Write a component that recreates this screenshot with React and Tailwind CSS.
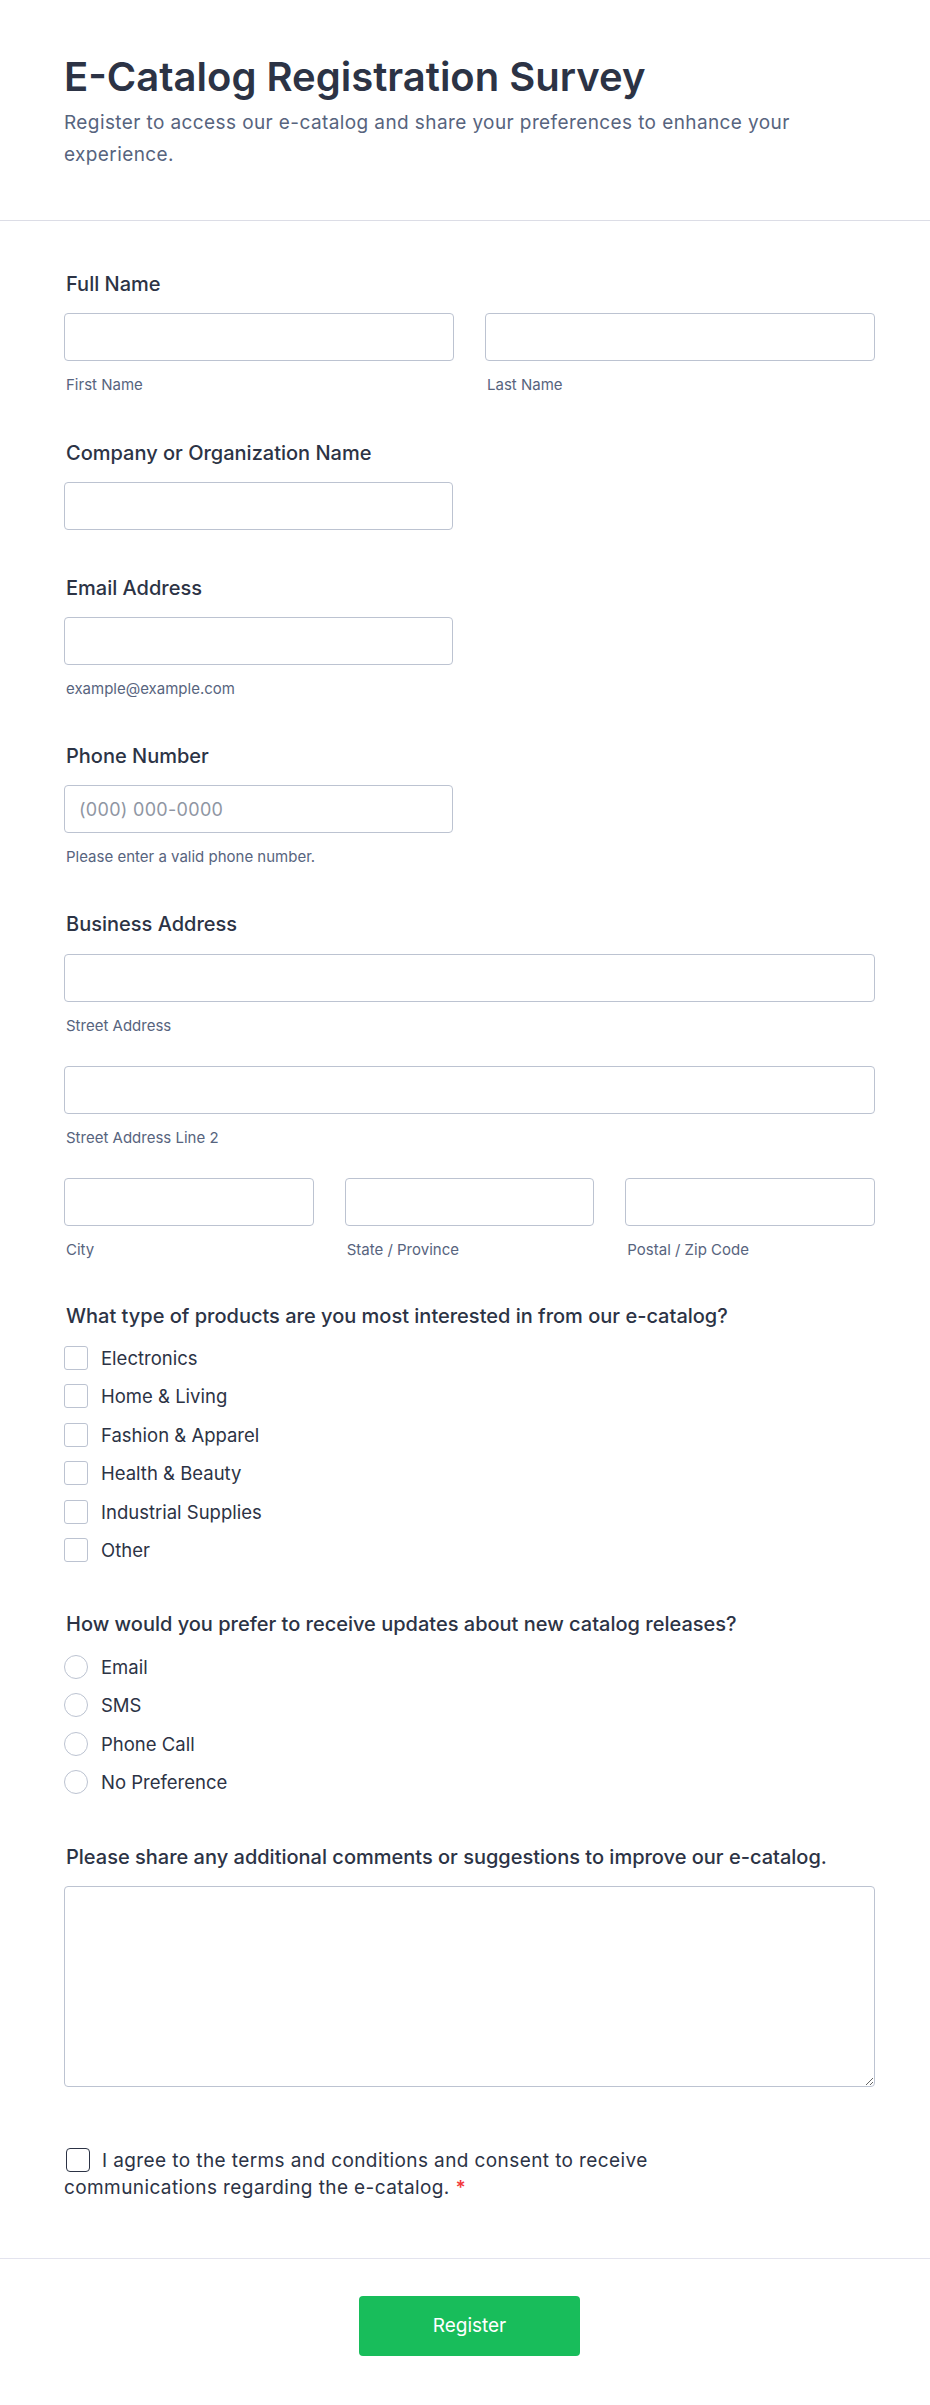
import React from 'react';

const PRODUCTS = ['Electronics', 'Home & Living', 'Fashion & Apparel', 'Health & Beauty', 'Industrial Supplies', 'Other'];
const CHANNELS = ['Email', 'SMS', 'Phone Call', 'No Preference'];

const inputCls =
  'block w-full h-12 bg-white border border-[#bcc3d1] rounded-[4px] px-[14px] text-[18px] tracking-[0.3px] text-[#2c3345] placeholder:text-[#8f96a3] outline-none';

const Label = ({ children, className = '' }) => (
  <div className={`text-[20px] leading-6 font-medium text-[#2c3345] pl-[2px] ${className}`}>{children}</div>
);

const Sub = ({ children }) => (
  <div className="mt-[14px] text-[15px] leading-5 text-[#57647e] pl-[2px]">{children}</div>
);

const App = () => {
  return (
    <div className="min-h-screen bg-white font-['Inter',sans-serif] text-[#2c3345]">
      {/* header */}
      <div className="border-b border-[#dcdde6] pl-16 pr-[55px] pt-[53px] pb-[49px]">
        <h1 className="text-[40px] leading-[48px] font-semibold text-[#2c3345]">E-Catalog Registration Survey</h1>
        <p className="mt-[6px] text-[19px] tracking-[0.4px] leading-8 text-[#57647e]">
          Register to access our e-catalog and share your preferences to enhance your experience.
        </p>
      </div>

      {/* form body */}
      <div className="pl-16 pr-[55px] pt-[51px] pb-[57px]">
        <div>
          <Label className="mb-[17px]">Full Name</Label>
          <div className="grid grid-cols-2 gap-[31px]">
            <div>
              <input type="text" className={inputCls} />
              <Sub>First Name</Sub>
            </div>
            <div>
              <input type="text" className={inputCls} />
              <Sub>Last Name</Sub>
            </div>
          </div>
        </div>

        <div className="mt-[46px]">
          <Label className="mb-[17px]">Company or Organization Name</Label>
          <div className="w-[389px]">
            <input type="text" className={inputCls} />
          </div>
        </div>

        <div className="mt-[46px]">
          <Label className="mb-[17px]">Email Address</Label>
          <div className="w-[389px]">
            <input type="email" className={inputCls} />
            <Sub>example@example.com</Sub>
          </div>
        </div>

        <div className="mt-[45px]">
          <Label className="mb-[17px]">Phone Number</Label>
          <div className="w-[389px]">
            <input type="tel" placeholder="(000) 000-0000" className={inputCls} />
            <Sub>Please enter a valid phone number.</Sub>
          </div>
        </div>

        <div className="mt-[45px]">
          <Label className="mb-[18px]">Business Address</Label>
          <input type="text" className={inputCls} />
          <Sub>Street Address</Sub>
          <input type="text" className={`${inputCls} mt-[30px]`} />
          <Sub>Street Address Line 2</Sub>
          <div className="grid grid-cols-3 gap-[31px] mt-[30px]">
            <div>
              <input type="text" className={inputCls} />
              <Sub>City</Sub>
            </div>
            <div>
              <input type="text" className={inputCls} />
              <Sub>State / Province</Sub>
            </div>
            <div>
              <input type="text" className={inputCls} />
              <Sub>Postal / Zip Code</Sub>
            </div>
          </div>
        </div>

        <div className="mt-[44px]">
          <Label className="mb-[18px]">What type of products are you most interested in from our e-catalog?</Label>
          <div className="flex flex-col gap-[14.4px]">
            {PRODUCTS.map(p => (
              <div key={p} className="flex items-center h-6">
                <span className="w-6 h-6 shrink-0 border border-[#bcc3d1] rounded-[3px] bg-white" />
                <span className="ml-[13px] text-[18.5px] leading-6 text-[#2c3345]">{p}</span>
              </div>
            ))}
          </div>
        </div>

        <div className="mt-[50px]">
          <Label className="mb-[19px]">How would you prefer to receive updates about new catalog releases?</Label>
          <div className="flex flex-col gap-[14.3px]">
            {CHANNELS.map(c => (
              <div key={c} className="flex items-center h-6">
                <span className="w-6 h-6 shrink-0 border border-[#bcc3d1] rounded-full bg-white" />
                <span className="ml-[13px] text-[18.5px] leading-6 text-[#2c3345]">{c}</span>
              </div>
            ))}
          </div>
        </div>

        <div className="mt-[51px]">
          <Label className="mb-[17px]">Please share any additional comments or suggestions to improve our e-catalog.</Label>
          <textarea className="block w-full h-[201px] bg-white border border-[#bcc3d1] rounded-[4px] p-3 text-lg outline-none" />
        </div>

        <div className="mt-[60px] max-w-[640px] text-[19px] tracking-[0.4px] leading-[27px] text-[#2c3345]">
          <span className="inline-block align-middle w-6 h-6 mr-[12px] ml-[2px] border border-[#2c3345] rounded-[4px] bg-white relative -top-[2px]" />
          I agree to the terms and conditions and consent to receive communications regarding the e-catalog.{' '}
          <span className="text-[#f23a3c] font-semibold">*</span>
        </div>
      </div>

      {/* footer */}
      <div className="border-t border-[#e3e3ee] pl-16 pr-[55px] pt-[37px] pb-[49px] flex justify-center">
        <button className="w-[221px] h-[60px] bg-[#18bd5b] rounded-[4px] text-white text-[19px]">Register</button>
      </div>
    </div>
  );
};

export default App;
